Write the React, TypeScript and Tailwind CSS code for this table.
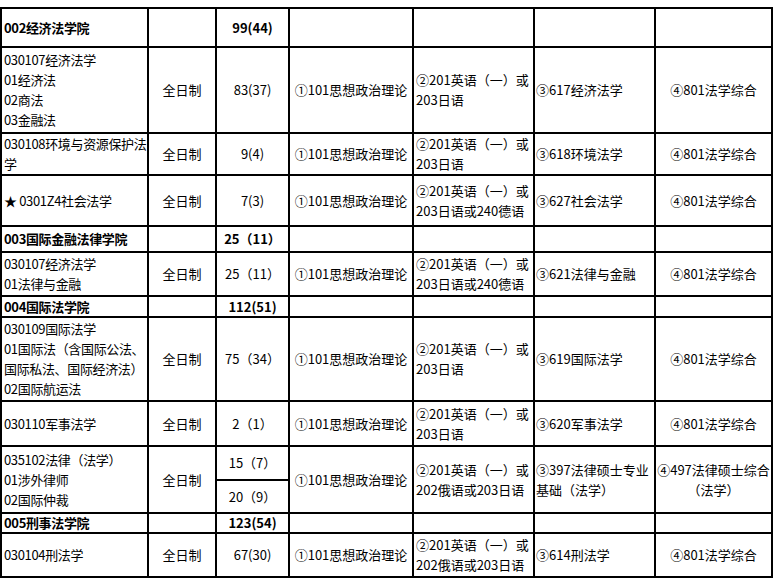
import React from 'react';

type Row = {
  h: number;
  name: string[];
  bold?: boolean;
  mode?: string;
  num: string;
  a?: string;
  b?: string[];
  c?: string[];
  d?: string[];
};

const rows: Row[] = [
  { h: 39, name: ['002经济法学院'], bold: true, num: '99(44)' },
  {
    h: 86,
    name: ['030107经济法学', '01经济法', '02商法', '03金融法'],
    mode: '全日制',
    num: '83(37)',
    a: '①101思想政治理论',
    b: ['②201英语（一）或', '203日语'],
    c: ['③617经济法学'],
    d: ['④801法学综合'],
  },
  {
    h: 42,
    name: ['030108环境与资源保护法', '学'],
    mode: '全日制',
    num: '9(4)',
    a: '①101思想政治理论',
    b: ['②201英语（一）或', '203日语'],
    c: ['③618环境法学'],
    d: ['④801法学综合'],
  },
  {
    h: 51,
    name: ['★ 0301Z4社会法学'],
    mode: '全日制',
    num: '7(3)',
    a: '①101思想政治理论',
    b: ['②201英语（一）或', '203日语或240德语'],
    c: ['③627社会法学'],
    d: ['④801法学综合'],
  },
  { h: 26, name: ['003国际金融法律学院'], bold: true, num: '25（11）' },
  {
    h: 44,
    name: ['030107经济法学', '01法律与金融'],
    mode: '全日制',
    num: '25（11）',
    a: '①101思想政治理论',
    b: ['②201英语（一）或', '203日语或240德语'],
    c: ['③621法律与金融'],
    d: ['④801法学综合'],
  },
  { h: 21, name: ['004国际法学院'], bold: true, num: '112(51)' },
  {
    h: 84,
    name: ['030109国际法学', '01国际法（含国际公法、', '国际私法、国际经济法）', '02国际航运法'],
    mode: '全日制',
    num: '75（34）',
    a: '①101思想政治理论',
    b: ['②201英语（一）或', '203日语'],
    c: ['③619国际法学'],
    d: ['④801法学综合'],
  },
  {
    h: 45,
    name: ['030110军事法学'],
    mode: '全日制',
    num: '2（1）',
    a: '①101思想政治理论',
    b: ['②201英语（一）或', '203日语'],
    c: ['③620军事法学'],
    d: ['④801法学综合'],
  },
];

const tail: Row[] = [
  { h: 20, name: ['005刑事法学院'], bold: true, num: '123(54)' },
  {
    h: 44,
    name: ['030104刑法学'],
    mode: '全日制',
    num: '67(30)',
    a: '①101思想政治理论',
    b: ['②201英语（一）或', '202俄语或203日语'],
    c: ['③614刑法学'],
    d: ['④801法学综合'],
  },
];

const td = 'border-2 border-black p-0 align-middle whitespace-nowrap overflow-hidden';
const first = `${td} pl-[2px] tracking-[-0.35px]`;

function Lines({ items }: { items?: string[] }) {
  if (!items) return null;
  return (
    <>
      {items.map((t, i) => (
        <div key={i}>{t}</div>
      ))}
    </>
  );
}

function TableRow({ row }: { row: Row }) {
  const b = row.bold ? 'font-bold leading-[16px]' : '';
  return (
    <tr style={{ height: row.h }}>
      <td className={`${first} ${b}`}>
        <Lines items={row.name} />
      </td>
      <td className={`${td} text-center`}>{row.mode}</td>
      <td className={`${td} text-center ${b}`}>{row.num}</td>
      <td className={`${td} text-center`}>{row.a}</td>
      <td className={`${td} pl-[2px]`}>
        <Lines items={row.b} />
      </td>
      <td className={`${td} pl-[1px]`}>
        <Lines items={row.c} />
      </td>
      <td className={`${td} text-center`}>
        <Lines items={row.d} />
      </td>
    </tr>
  );
}

export default function App() {
  return (
    <div className="w-[777px] h-[580px] overflow-hidden bg-white pt-[7px] text-[13px] leading-[20px] text-black [font-family:'Noto_Sans_CJK_SC','Noto_Sans',sans-serif]">
      <table className="table-fixed border-collapse w-[771px]">
        <colgroup>
          <col className="w-[147px]" />
          <col className="w-[68px]" />
          <col className="w-[73px]" />
          <col className="w-[124px]" />
          <col className="w-[121px]" />
          <col className="w-[121px]" />
          <col className="w-[117px]" />
        </colgroup>
        <tbody>
          {rows.map((r, i) => (
            <TableRow key={i} row={r} />
          ))}
          <tr className="h-[34px]">
            <td rowSpan={2} className={first}>
              <div>035102法律（法学）</div>
              <div>01涉外律师</div>
              <div>02国际仲裁</div>
            </td>
            <td rowSpan={2} className={`${td} text-center`}>全日制</td>
            <td className={`${td} text-center`}>15（7）</td>
            <td rowSpan={2} className={`${td} text-center`}>①101思想政治理论</td>
            <td rowSpan={2} className={`${td} pl-[2px]`}>
              <div>②201英语（一）或</div>
              <div>202俄语或203日语</div>
            </td>
            <td rowSpan={2} className={`${td} pl-[1px]`}>
              <div>③397法律硕士专业</div>
              <div>基础（法学）</div>
            </td>
            <td rowSpan={2} className={`${td} text-center`}>
              <div>④497法律硕士综合</div>
              <div>（法学）</div>
            </td>
          </tr>
          <tr className="h-[33px]">
            <td className={`${td} text-center`}>20（9）</td>
          </tr>
          {tail.map((r, i) => (
            <TableRow key={i} row={r} />
          ))}
        </tbody>
      </table>
    </div>
  );
}
